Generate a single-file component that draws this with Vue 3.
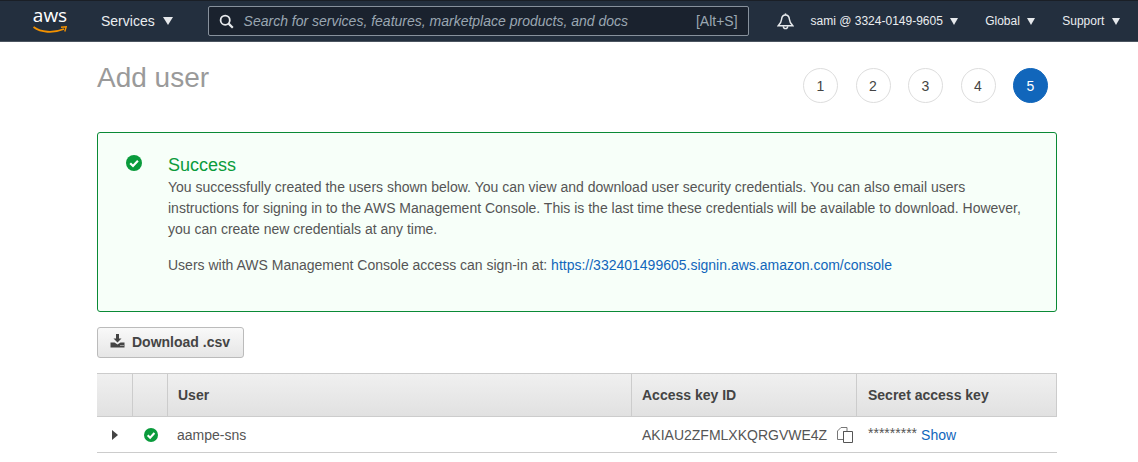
<script setup>
const steps = [1, 2, 3, 4, 5];
</script>

<template>
  <div class="page">
    <header class="nav">
      <div class="logo">
        <span class="logo-text">aws</span>
        <svg class="smile" width="34" height="8" viewBox="0 0 34 8">
          <path d="M0.5 1C8 6.5 20 7.5 31 3" fill="none" stroke="#f29100" stroke-width="1.8" />
          <path d="M28 1.2L33.2 0.8L31.8 5.5" fill="none" stroke="#f29100" stroke-width="1.4" />
        </svg>
      </div>
      <div class="nav-item services">Services <span class="caret big"></span></div>
      <div class="search">
        <svg width="15" height="15" viewBox="0 0 15 15" class="search-icon">
          <circle cx="6.2" cy="6.2" r="4.6" fill="none" stroke="#e6e9ec" stroke-width="1.8" />
          <path d="M9.6 9.6L13.8 13.8" stroke="#e6e9ec" stroke-width="2.2" />
        </svg>
        <span class="placeholder">Search for services, features, marketplace products, and docs</span>
        <span class="shortcut">[Alt+S]</span>
      </div>
      <svg class="bell" width="17" height="17" viewBox="0 0 17 17">
        <path d="M8.5 2C6 2 4.8 3.8 4.6 6.2C4.4 9 3.4 10.6 1.2 12.8H15.8C13.6 10.6 12.6 9 12.4 6.2C12.2 3.8 11 2 8.5 2Z" fill="none" stroke="#e6e9ec" stroke-width="1.5" />
        <path d="M8.5 0.4V2" stroke="#e6e9ec" stroke-width="1.5" />
        <path d="M6.3 13.2C6.3 16.4 10.7 16.4 10.7 13.2" fill="none" stroke="#e6e9ec" stroke-width="1.4" />
      </svg>
      <div class="nav-item small account">sami @ 3324-0149-9605 <span class="caret"></span></div>
      <div class="nav-item small region">Global <span class="caret"></span></div>
      <div class="nav-item small support">Support <span class="caret"></span></div>
    </header>

    <main class="content">
      <div class="title-row">
        <h1>Add user</h1>
        <ol class="steps">
          <li v-for="s in steps" :key="s" :class="{ active: s === 5 }">{{ s }}</li>
        </ol>
      </div>

      <section class="alert">
        <svg class="check alert-check" width="16" height="16" viewBox="0 0 16 16">
          <circle cx="8" cy="8" r="8" fill="#0a9b3c" />
          <path d="M4.2 8.2L7 11L11.9 5.8" fill="none" stroke="#fff" stroke-width="2.2" />
        </svg>
        <div class="alert-body">
          <h2>Success</h2>
          <p>You successfully created the users shown below. You can view and download user security credentials. You can also email users instructions for signing in to the AWS Management Console. This is the last time these credentials will be available to download. However, you can create new credentials at any time.</p>
          <p class="signin">Users with AWS Management Console access can sign-in at: <a>https://332401499605.signin.aws.amazon.com/console</a></p>
        </div>
      </section>

      <button class="download">
        <svg class="download-icon" width="15" height="14" viewBox="0 0 15 14">
          <path d="M6 0H9V4.5H11.5L7.5 8.5L3.5 4.5H6Z" fill="#444" />
          <path fill-rule="evenodd" d="M0.5 8.5H4.5L7.5 10.5L10.5 8.5H14.5V13.5H0.5ZM10.5 11V12H11.5V11ZM12.5 11V12H13.5V11Z" fill="#444" />
        </svg>
        <span class="download-label">Download .csv</span>
      </button>

      <div class="table">
        <div class="cell head"></div>
        <div class="cell head"></div>
        <div class="cell head label">User</div>
        <div class="cell head label">Access key ID</div>
        <div class="cell head label secret-head">Secret access key</div>

        <div class="cell row center"><span class="expand"></span></div>
        <div class="cell row center">
          <svg class="check" width="14" height="14" viewBox="0 0 16 16">
            <circle cx="8" cy="8" r="8" fill="#0a9b3c" />
            <path d="M4.2 8.2L7 11L11.9 5.8" fill="none" stroke="#fff" stroke-width="2.4" />
          </svg>
        </div>
        <div class="cell row name">aampe-sns</div>
        <div class="cell row key">
          <span>AKIAU2ZFMLXKQRGVWE4Z</span>
          <svg class="copy" width="16" height="16" viewBox="0 0 16 16">
            <path d="M4 0.5H10V4.5H6.5V12.5H0.5V4Z" fill="none" stroke="#777" stroke-width="1" />
            <path d="M6.5 4.5H15.5V15.5H6.5Z" fill="none" stroke="#555" stroke-width="1" />
          </svg>
        </div>
        <div class="cell row secret"><span class="stars">*********</span><a>Show</a></div>
      </div>
    </main>
  </div>
</template>

<style scoped>
.page {
  width: 1138px;
  height: 462px;
  overflow: hidden;
  background: #fff;
  font-family: "Liberation Sans", Arial, sans-serif;
  color: #555;
}
.nav {
  display: flex;
  align-items: center;
  height: 42px;
  box-sizing: border-box;
  border-top: 1px solid #1a1f26;
  border-bottom: 1px solid #4b5560;
  background: #232f3e;
  color: #eaedf0;
}
.logo {
  display: flex;
  flex-direction: column;
  align-items: center;
  width: 34px;
  margin-left: 33px;
  height: 30px;
}
.logo-text {
  font-size: 19px;
  line-height: 17px;
  margin-top: 1px;
  color: #fff;
  font-family: "Open Sans", sans-serif;
}
.smile {
  margin-top: 2px;
}
.nav-item {
  display: flex;
  align-items: center;
  white-space: pre;
  font-size: 14px;
}
.nav-item.small {
  font-size: 12px;
}
.services {
  margin-left: 34px;
}
.caret {
  display: inline-block;
  width: 0;
  height: 0;
  margin-left: 4px;
  border-left: 4.5px solid transparent;
  border-right: 4.5px solid transparent;
  border-top: 7px solid #e6e9ec;
}
.caret.big {
  margin-left: 4px;
  border-left-width: 5px;
  border-right-width: 5px;
  border-top-width: 8px;
}
.search {
  display: flex;
  align-items: center;
  box-sizing: border-box;
  width: 541px;
  height: 30px;
  margin-left: 35px;
  padding: 0 10px 0 10px;
  background: #1a222e;
  border: 1px solid #87919c;
  border-radius: 2px;
}
.placeholder {
  margin-left: 10px;
  flex: 1;
  font-size: 14px;
  font-style: italic;
  color: #9aa7b2;
}
.shortcut {
  font-size: 14px;
  color: #9aa7b2;
}
.bell {
  margin-left: 28px;
}
.account {
  margin-left: 17px;
}
.region {
  margin-left: 27px;
}
.support {
  margin-left: 27px;
}
.content {
  width: 960px;
  margin-left: 97px;
}
.title-row {
  display: flex;
  justify-content: space-between;
  height: 90px;
}
h1 {
  margin: 18px 0 0;
  font-size: 28px;
  line-height: 36px;
  font-weight: 400;
  color: #9a9a9a;
}
.steps {
  display: flex;
  gap: 17.5px;
  list-style: none;
  margin: 26px 9px 0 0;
  padding: 0;
}
.steps li {
  display: flex;
  align-items: center;
  justify-content: center;
  box-sizing: border-box;
  width: 35px;
  height: 35px;
  border: 1px solid #ddd;
  border-radius: 50%;
  font-size: 14px;
  color: #444;
}
.steps li.active {
  background: #1166bb;
  border-color: #1166bb;
  color: #fff;
}
.alert {
  display: flex;
  box-sizing: border-box;
  height: 180px;
  padding: 22px 20px 0 28px;
  background: #f7fff9;
  border: 1px solid #0a8a36;
  border-radius: 3px;
}
.alert-check {
  flex: none;
  margin-right: 26px;
}
h2 {
  margin: 0;
  font-size: 18px;
  line-height: 20px;
  font-weight: 400;
  color: #0a9b3c;
}
.alert-body p {
  margin: 2px 0 0;
  font-size: 14px;
  line-height: 21px;
  color: #555;
}
.alert-body p.signin {
  margin-top: 15px;
}
a {
  color: #1166bb;
}
.download {
  display: flex;
  align-items: center;
  gap: 7px;
  box-sizing: border-box;
  width: 147px;
  height: 31px;
  margin-top: 15px;
  padding: 0 0 0 12px;
  background: linear-gradient(#f9f9f9, #e6e6e6);
  border: 1px solid #bbb;
  border-radius: 3px;
  font-family: inherit;
  font-size: 14px;
  font-weight: 700;
  color: #444;
}
.download-icon {
  margin-top: -4px;
}
.download-label {
  margin-top: -2px;
}
.table {
  display: grid;
  grid-template-columns: 36px 35px 464px 225px 200px;
  grid-template-rows: 44px 36px;
  margin-top: 15px;
}
.cell {
  display: flex;
  align-items: center;
  box-sizing: border-box;
}
.head {
  background: linear-gradient(#f0f0f0, #e1e1e1);
  border-top: 1px solid #ccc;
  border-bottom: 1px solid #ccc;
  border-right: 1px solid #ccc;
}
.head.label {
  padding-left: 10px;
  font-size: 14px;
  font-weight: 700;
  color: #444;
}
.head.label.secret-head {
  padding-left: 11px;
}
.row {
  border-bottom: 1px solid #ccc;
  font-size: 14px;
  white-space: pre;
}
.center {
  justify-content: center;
}
.name {
  padding-left: 9px;
}
.key {
  padding-left: 10px;
}
.secret {
  padding-left: 11px;
}
.stars {
  margin: -3px 4px 0 0;
}
.expand {
  width: 0;
  height: 0;
  border-top: 5px solid transparent;
  border-bottom: 5px solid transparent;
  border-left: 6px solid #444;
}
.copy {
  margin-left: 10px;
}
</style>

<style>
html,
body {
  margin: 0;
  background: #fff;
}
</style>
